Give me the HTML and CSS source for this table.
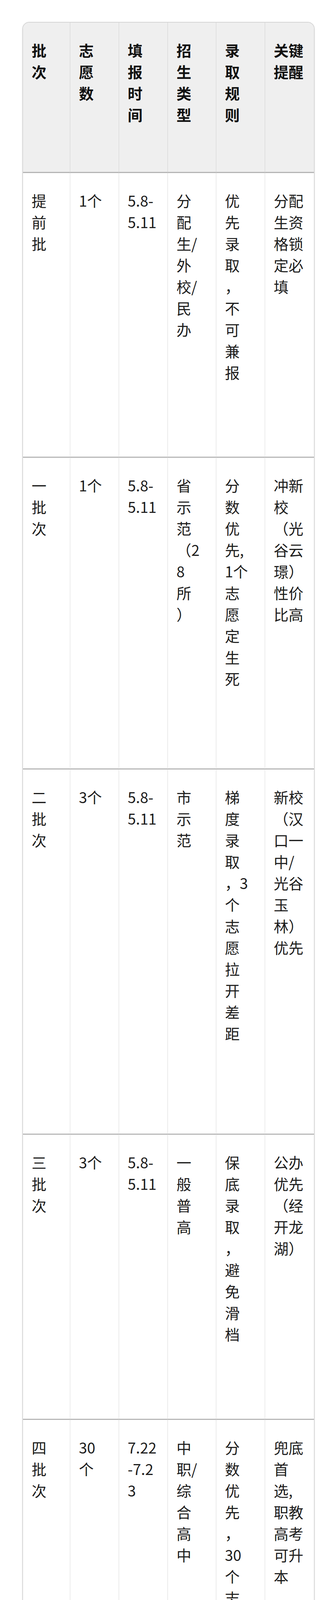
FILE: index.html
```html
<!DOCTYPE html>
<html lang="zh-CN">
<head>
<meta charset="utf-8">
<title>志愿批次</title>
<link rel="stylesheet" href="styles.css">
</head>
<body>
<div class="card">
  <table class="batch-table">
    <colgroup>
      <col class="c1"><col class="c2"><col class="c3"><col class="c4"><col class="c5"><col class="c6">
    </colgroup>
    <thead>
      <tr class="r-head">
        <th>批次</th>
        <th>志愿数</th>
        <th>填报时间</th>
        <th>招生类型</th>
        <th>录取规则</th>
        <th>关键提醒</th>
      </tr>
    </thead>
    <tbody>
      <tr class="r1">
        <td>提前批</td>
        <td>1个</td>
        <td>5.8-5.11</td>
        <td>分配生/外校/民办</td>
        <td>优先录取，不可兼报</td>
        <td>分配生资格锁定必填</td>
      </tr>
      <tr class="r2">
        <td>一批次</td>
        <td>1个</td>
        <td>5.8-5.11</td>
        <td>省示范（28所）</td>
        <td>分数优先,<br>1个志愿定生死</td>
        <td>冲新校（光谷云璟）性价比高</td>
      </tr>
      <tr class="r3">
        <td>二批次</td>
        <td>3个</td>
        <td>5.8-5.11</td>
        <td>市示范</td>
        <td>梯度录取，3个志愿拉开差距</td>
        <td>新校（汉口一中/光谷玉林）优先</td>
      </tr>
      <tr class="r4">
        <td>三批次</td>
        <td>3个</td>
        <td>5.8-5.11</td>
        <td>一般普高</td>
        <td>保底录取，避免滑档</td>
        <td>公办优先（经开龙湖）</td>
      </tr>
      <tr class="r5">
        <td>四批次</td>
        <td>30个</td>
        <td>7.22-7.23</td>
        <td>中职/综合高中</td>
        <td>分数优先，30个志愿全覆盖</td>
        <td>兜底首选,职教高考可升本</td>
      </tr>
    </tbody>
  </table>
</div>
</body>
</html>
```

FILE: styles.css
```css
html, body {
  margin: 0;
  padding: 0;
  background: #ffffff;
}

body {
  font-family: "Noto Sans CJK SC", "Noto Sans", sans-serif;
  color: #1a1a1a;
}

.card {
  margin: 56px 52px 0 57px;
  width: 745px;
  border: 2px solid #d6d6d6;
  border-radius: 18px;
  overflow: hidden;
  box-shadow: 0 2px 5px rgba(0, 0, 0, 0.06);
}

.batch-table {
  width: 745px;
  table-layout: fixed;
  border-collapse: separate;
  border-spacing: 0;
  font-size: 38px;
  line-height: 55px;
  text-spacing-trim: space-all;
}

.c1 { width: 120px; }
.c2 { width: 125px; }
.c3 { width: 125px; }
.c4 { width: 124px; }
.c5 { width: 125px; }
.c6 { width: 126px; }

.batch-table th,
.batch-table td {
  box-sizing: border-box;
  padding: 42px 27px 0 22px;
  text-align: left;
  vertical-align: top;
  overflow-wrap: break-word;
  word-break: normal;
  border-left: 1px solid #dadada;
}

.batch-table th:first-child,
.batch-table td:first-child {
  border-left: none;
}

.batch-table th:last-child,
.batch-table td:last-child {
  padding-right: 20px;
}

.batch-table th {
  background: #efefef;
  color: #111111;
  font-weight: 700;
  border-bottom: 3px solid #b5b5b5;
  border-left-color: #d2d2d2;
}

.batch-table td {
  font-weight: 400;
  color: #1c1c1c;
}

.batch-table tbody tr:not(:last-child) td {
  border-bottom: 3px solid #b8b8b8;
}

.r-head { height: 385px; }
.r1 { height: 729px; }
.r2 { height: 798px; }
.r3 { height: 935px; }
.r4 { height: 730px; }
.r5 { height: 932px; }
```
